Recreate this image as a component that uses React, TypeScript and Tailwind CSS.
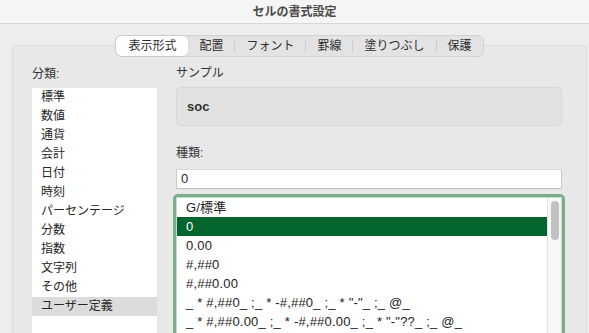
import React from "react";

const categories = [
  "標準",
  "数値",
  "通貨",
  "会計",
  "日付",
  "時刻",
  "パーセンテージ",
  "分数",
  "指数",
  "文字列",
  "その他",
  "ユーザー定義",
];

const formats = [
  "G/標準",
  "0",
  "0.00",
  "#,##0",
  "#,##0.00",
  '_ * #,##0_ ;_ * -#,##0_ ;_ * "-"_ ;_ @_',
  '_ * #,##0.00_ ;_ * -#,##0.00_ ;_ * "-"??_ ;_ @_',
];

const tabs = ["表示形式", "配置", "フォント", "罫線", "塗りつぶし", "保護"];

export default function App() {
  const selectedTab = 0;
  const selectedCategory = 11;
  const selectedFormat = 1;

  return (
    <div className="w-[589px] h-[333px] overflow-hidden bg-[#ededed] font-['Liberation_Sans','Noto_Sans_CJK_JP',sans-serif] text-[#262626]">
      {/* タイトルバー */}
      <div className="h-[24px] bg-[#f5f5f5] border-b border-[#d8d8d8] flex items-center justify-center text-[12px] font-bold text-[#4a4a4a]">
        セルの書式設定
      </div>

      <div className="pl-[12px] pr-[2px] pt-[21px]">
        <div className="bg-[#e8e8e8] border border-[#dcdcdc] rounded-[5px] h-[300px]">
          {/* タブ */}
          <div className="flex justify-center -mt-[11px]">
            <div className="flex items-center h-[22px] bg-[#e3e3e3] border border-[#d3d3d3] rounded-[6px] text-[12px] text-[#2e2e2e]">
              {tabs.map((t, i) => (
                <React.Fragment key={t}>
                  {i > 0 && i !== selectedTab && i - 1 !== selectedTab && (
                    <div className="w-px h-[12px] bg-[#cdcdcd]" />
                  )}
                  <div
                    className={
                      i === selectedTab
                        ? "h-[20px] px-[12px] flex items-center bg-white rounded-[5px] shadow-[0_0_1px_rgba(0,0,0,0.35)]"
                        : "h-[20px] px-[11px] flex items-center"
                    }
                  >
                    {t}
                  </div>
                </React.Fragment>
              ))}
            </div>
          </div>

          <div className="flex items-start pl-[19px]">
            {/* 分類 */}
            <div className="flex flex-col mt-[9px] w-[125px]">
              <div className="h-[16px] leading-[16px] text-[12px] text-[#333]">分類:</div>
              <div className="mt-[6px] bg-white h-[260px]">
                {categories.map((c, i) => (
                  <div
                    key={c}
                    className={
                      i === selectedCategory
                        ? "h-[19px] leading-[19px] pl-[9px] text-[12px] bg-[#dcdcdc]"
                        : "h-[19px] leading-[19px] pl-[9px] text-[12px]"
                    }
                  >
                    {c}
                  </div>
                ))}
              </div>
            </div>

            {/* 右側 */}
            <div className="flex flex-col mt-[8px] ml-[19px]">
              <div className="h-[16px] leading-[16px] text-[12px] text-[#333]">サンプル</div>
              <div className="mt-[6px] w-[386px] h-[39px] bg-[#e2e2e2] border border-[#d7d7d7] rounded-[5px] flex items-center pl-[10px] text-[13px] font-bold text-[#333]">
                soc
              </div>

              <div className="mt-[19px] h-[16px] leading-[16px] text-[12px] text-[#333]">種類:</div>
              <div className="mt-[8px] w-[386px] h-[20px] bg-white border border-[#cbcbcb] border-t-[#d9d9d9] border-b-[#bdbdbd] flex items-center pl-[4px] text-[13px]">
                0
              </div>

              <div className="mt-[5px] -ml-[3px] w-[392px] h-[150px] border-[3px] border-[#79ad8d] rounded-[5px] overflow-hidden">
                <div className="flex h-full border border-[#c4dacb] bg-white">
                  <div className="flex-1">
                    {formats.map((f, i) => (
                      <div
                        key={f}
                        className={
                          i === selectedFormat
                            ? "h-[19px] leading-[19px] pl-[9px] text-[13px] whitespace-pre bg-[#05652f] text-white"
                            : "h-[19px] leading-[19px] pl-[9px] text-[13px] whitespace-pre text-[#222] tracking-[0.2px]"
                        }
                      >
                        {f}
                      </div>
                    ))}
                  </div>
                  <div className="w-[14px] bg-[#f7f7f7] border-l border-[#e2e2e2] flex justify-center">
                    <div className="mt-[3px] w-[8px] h-[39px] rounded-full bg-[#c2c2c2]" />
                  </div>
                </div>
              </div>
            </div>
          </div>
        </div>
      </div>
    </div>
  );
}
